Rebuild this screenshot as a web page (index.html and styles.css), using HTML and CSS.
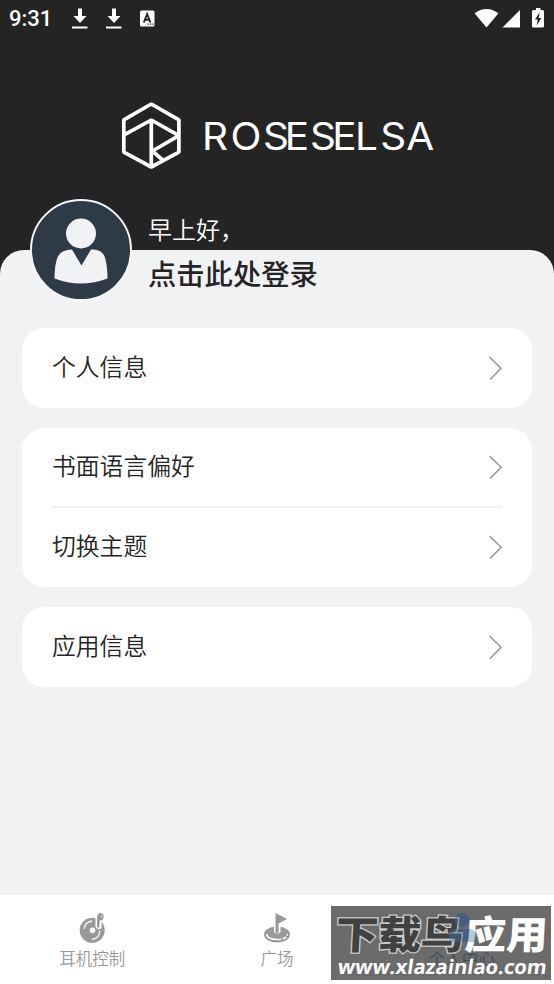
FILE: index.html
```html
<!DOCTYPE html>
<html lang="zh-CN">
<head>
<meta charset="utf-8">
<title>ROSESELSA</title>
<link rel="stylesheet" href="styles.css">
</head>
<body>
<div class="app">
  <header class="hero">
    <div class="status">
      <span class="time">9:31</span>
      <svg class="status-left" width="86" height="22" viewBox="72 8 86 22" fill="#fff">
        <path d="M78 8.500h4v7.500h4.500l-6.500 7-6.500-7H78zM72 26.500h15.500v2H72z"/>
        <path d="M112 8.500h4v7.500h4.500l-6.500 7-6.500-7h4.500zM106 26.500h15.500v2H106z"/>
        <rect x="140" y="10.500" width="14.500" height="16" rx="1.500"/>
        <path d="M143.800 22.500l3.300-8.500 3.300 8.500M145 19.800h4.200" fill="none" stroke="#242424" stroke-width="1.900"/>
        <path d="M147.500 23.500h1.300v1.300h-1.300zM150 23.500h1.300v1.300H150zM152.300 23.500h1.300v1.300h-1.300z" fill="#242424"/>
      </svg>
      <svg class="status-right" width="72" height="22" viewBox="474 7 72 22" fill="#fff">
        <path d="M474.500 13.300Q486.500 4.500 498.500 13.300L486.500 27.500z"/>
        <path d="M520 10v17.500h-17.500z"/>
        <path d="M536 8h4.500v2h2q1.500 0 1.500 1.500v14.500q0 1.500-1.500 1.500h-9q-1.500 0-1.500-1.500V11.500q0-1.500 1.500-1.500H536z"/>
        <path d="M539.800 12l-4.800 7.500h2.700l-1 6 4.700-7.500h-2.700z" fill="#242424"/>
      </svg>
    </div>
    <svg class="brand" width="320" height="72" viewBox="116 100 320 72">
      <g fill="none" stroke="#fff" stroke-width="3.700" stroke-linejoin="bevel">
        <path d="M151.300 104l27.600 15.800v32.400l-27.600 14.800-27.500-14.800v-32.400z"/>
        <path d="M123.700 135.200L151.300 120l27.600 15.700-26.500 15.300 10.400 9.200M151.300 120v46"/>
      </g>
      <text class="wordmark" transform="translate(202 149.900) scale(1.080 1)" x="0 26.500 56.500 76.600 100 120.500 141.600 165 189.200">ROSESELSA</text>
    </svg>
  </header>
  <main class="sheet">
    <section class="profile">
      <svg class="avatar" width="104" height="104" viewBox="0 0 104 104">
        <circle cx="52" cy="52" r="50" fill="#2e3a46" stroke="#f4f6f8" stroke-width="2"/>
        <circle cx="52" cy="35.500" r="15" fill="#f1f2f4"/>
        <path d="M43 51.500L52.500 67.500 62 51.500q11-1 14 8 2.500 9 2.500 21-26.500 10-53 0 0-14 3-21 3-8 14.500-8z" fill="#f1f2f4"/>
      </svg>
      <div class="welcome">
        <p class="greeting">早上好，</p>
        <p class="login">点击此处登录</p>
      </div>
    </section>
    <div class="cards">
      <section class="card">
        <div class="row"><span>个人信息</span><svg class="chevron" width="15" height="24" viewBox="0 0 15 24"><path d="M2.500 1L14 12.300 3 23.500"/></svg></div>
      </section>
      <section class="card">
        <div class="row divided"><span>书面语言偏好</span><svg class="chevron" width="15" height="24" viewBox="0 0 15 24"><path d="M2.500 1L14 12.300 3 23.500"/></svg></div>
        <div class="row"><span>切换主题</span><svg class="chevron" width="15" height="24" viewBox="0 0 15 24"><path d="M2.500 1L14 12.300 3 23.500"/></svg></div>
      </section>
      <section class="card">
        <div class="row"><span>应用信息</span><svg class="chevron" width="15" height="24" viewBox="0 0 15 24"><path d="M2.500 1L14 12.300 3 23.500"/></svg></div>
      </section>
    </div>
  </main>
  <nav class="tabs">
    <div class="tab">
      <svg width="30" height="32" viewBox="77 912 30 32">
        <circle cx="92.200" cy="930.300" r="12.500" fill="#999"/>
        <path d="M84 929q1-7 8-8M100 930.500q-.5 8-8 9" fill="none" stroke="#fff" stroke-width="1.300"/>
        <circle cx="92.500" cy="930.300" r="2.800" fill="#fff"/>
        <path d="M95.500 927v-11q1-4 5-4 5 1 4 6-1 4-3 4v6q-3 3-6-1z" fill="#fff"/>
        <path d="M97 927v-9.500q0-4.500 3.500-4.500 3.500.5 3.300 4-.6 4-4.300 3.500v6.500q-1.200 1.500-2.500 0z" fill="#999"/>
        <path d="M101.500 915q1 1 .3 3" fill="none" stroke="#fff" stroke-width=".7"/>
      </svg>
      <span>耳机控制</span>
    </div>
    <div class="tab">
      <svg width="30" height="32" viewBox="262 912 30 32">
        <ellipse cx="277" cy="934.500" rx="13" ry="8" fill="#999"/>
        <path d="M266.500 934q1 5.500 10.500 5.500t10.500-5.500" fill="none" stroke="#fff" stroke-width="1.500" stroke-dasharray="17 1.500 4 1.500"/>
        <path d="M274 932v-7h6.500v7q-3.500 3-6.500 0z" fill="#fff"/>
        <path d="M275.500 932.500V913l11.500 6-8.500 4.500v9q-1.500 1.500-3 0z" fill="#999"/>
      </svg>
      <span>广场</span>
    </div>
    <div class="tab active">
      <svg width="30" height="32" viewBox="0 0 30 32" fill="#4c7dbb"><circle cx="15" cy="8" r="7"/><path d="M2 29V22q0-5 6-5h14q6 0 6 5v7z"/></svg>
      <span>个人中心</span>
    </div>
  </nav>
  <svg class="watermark" width="220" height="74" viewBox="331 906 220 74">
    <rect x="331" y="906" width="220" height="74" fill="#464646" fill-opacity=".8"/>
    <g class="mark-title">
      <text class="mark-dark" transform="translate(335 949) skewX(-3)" textLength="128" lengthAdjust="spacingAndGlyphs">下载鸟</text>
      <text class="mark-light" transform="translate(464 949) skewX(-3)" textLength="83" lengthAdjust="spacingAndGlyphs">应用</text>
    </g>
    <g fill="#4774ab" fill-opacity=".4"><circle cx="462" cy="920" r="7"/><path d="M449 942v-8q0-5 6-5h14q6 0 6 5v8z"/></g>
    <text class="mark-url" transform="translate(337 973.500) skewX(-8)" textLength="209" lengthAdjust="spacingAndGlyphs">www.xlazainlao.com</text>
  </svg>
</div>
</body>
</html>
```
FILE: styles.css
```css
* { box-sizing: border-box; }
body {
  margin: 0;
  background: #f1f2f4;
  color: #242424;
  font-family: "Noto Sans CJK SC", sans-serif;
}
p { margin: 0; }
svg { display: block; flex: none; }
.app {
  position: relative;
  display: flex;
  flex-direction: column;
  width: 554px;
  height: 984px;
  overflow: hidden;
  background: #242424;
}
.hero { height: 250px; flex: none; }
.status {
  display: flex;
  align-items: center;
  height: 38px;
  padding: 0 8px 0 9px;
}
.time {
  width: 63px;
  color: #fff;
  font: 500 22px/38px Roboto, sans-serif;
}
.status-right { margin-left: auto; margin-top: -2px; }
.brand { margin: 62px 0 0 116px; }
.wordmark { fill: #fff; font: 400 37.500px Inter, sans-serif; }
.sheet {
  flex: 1;
  min-height: 0;
  padding: 0 22px;
  border-radius: 24px 24px 0 0;
  background: #f1f2f4;
}
.profile {
  display: flex;
  height: 104px;
  margin: -52px 0 26.400px 7px;
}
.welcome { padding: 13px 0 0 15px; }
.greeting { color: #fff; font-size: 24px; line-height: 36px; font-weight: 350; }
.login { margin-top: 5px; font-size: 28.300px; line-height: 42px; font-weight: 500; }
.cards { display: grid; gap: 20px; }
.card { padding: 0 30px; border-radius: 22px; background: #fff; }
.row {
  display: flex;
  justify-content: space-between;
  height: 79.600px;
  padding-top: 19.500px;
  font-size: 23.800px;
  line-height: 36px;
  font-weight: 350;
}
.divided { border-bottom: 2px solid #f1f1f1; }
.chevron { margin-top: 8px; fill: none; stroke: #999; stroke-width: 1.600; }
.tabs {
  display: grid;
  grid-template-columns: repeat(3, 1fr);
  height: 89px;
  flex: none;
  padding-top: 17px;
  background: #fff;
}
.tab {
  display: flex;
  flex-direction: column;
  align-items: center;
  color: #999;
  font-size: 16.500px;
  line-height: 28px;
  font-weight: 350;
}
.active { color: #285a98; }
.watermark { position: absolute; left: 331px; top: 906px; }
.mark-title { font-size: 39px; font-weight: 900; }
.mark-dark { fill: #414141; stroke: #ccc; stroke-width: 2.500px; paint-order: stroke; }
.mark-light { fill: #fff; }
.mark-url { fill: #fff; font: 700 20px "Open Sans", sans-serif; }
```
